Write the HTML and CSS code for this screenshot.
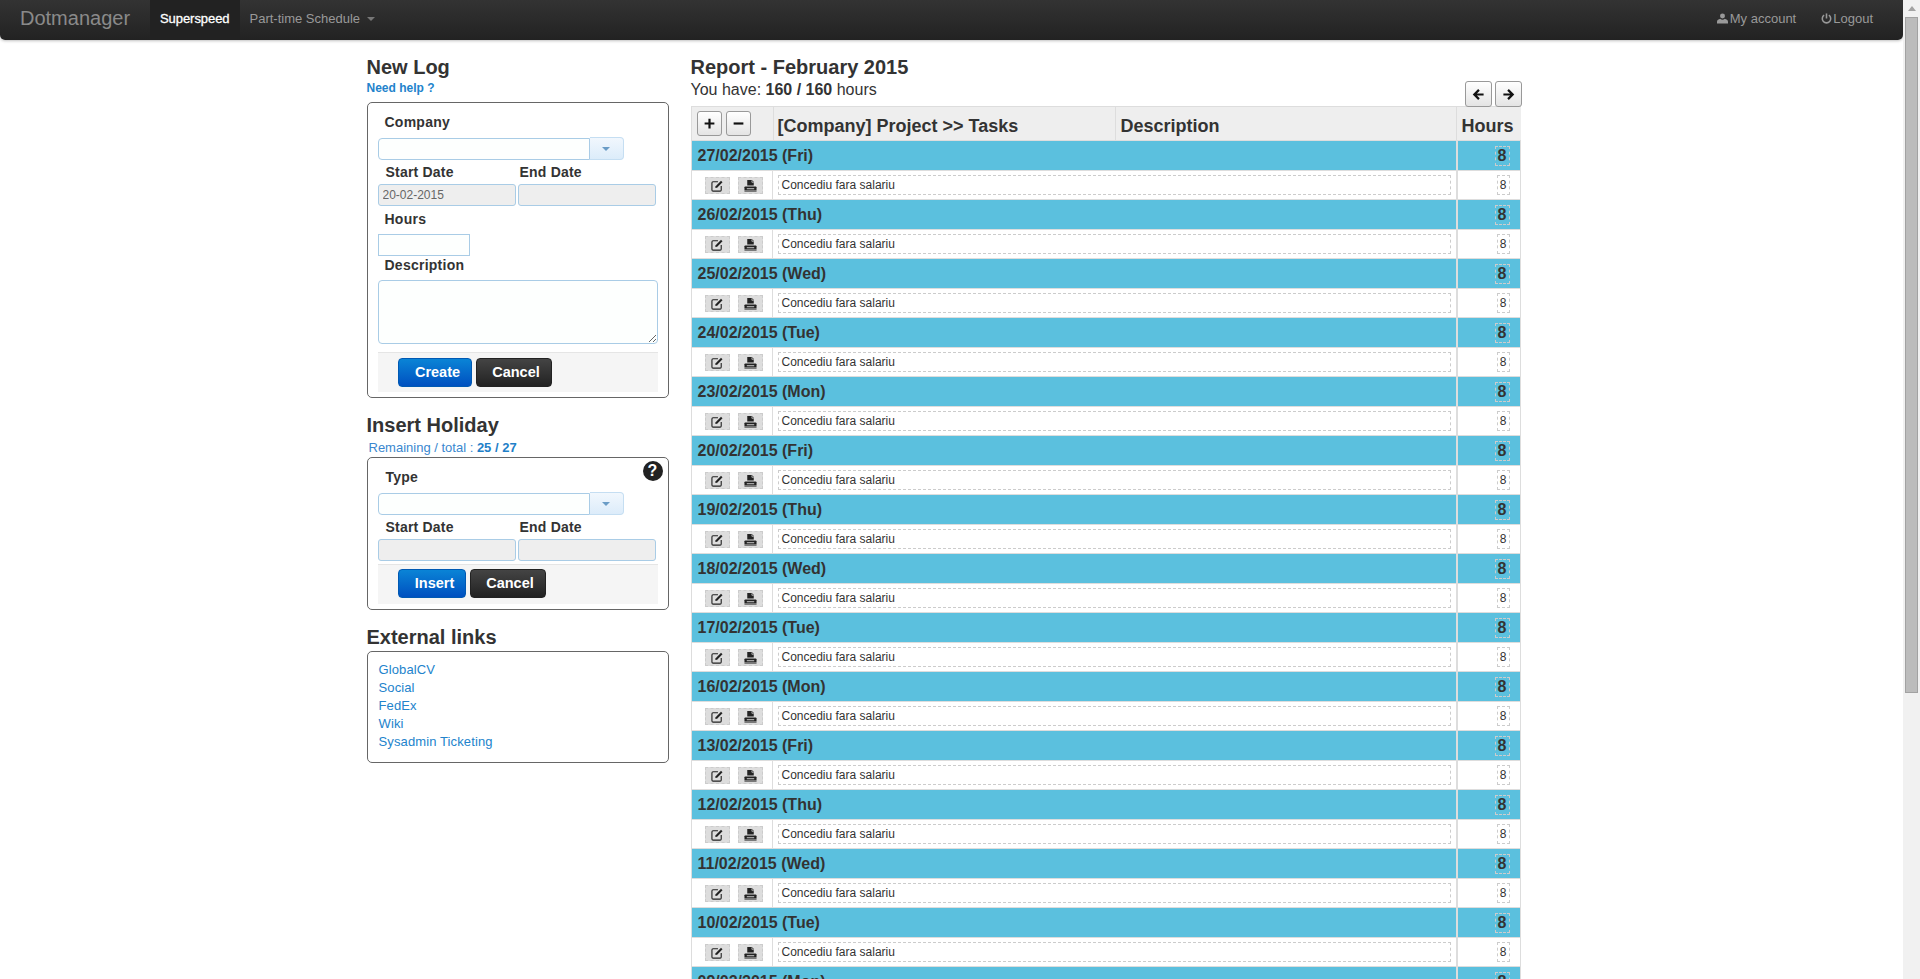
FILE: index.html
```html
<!DOCTYPE html>
<html lang="en">
<head>
    <meta charset="UTF-8">
    <title>Dotmanager</title>
    <link rel="stylesheet" href="styles.css">
</head>
<body>
    <svg class="sprite" xmlns="http://www.w3.org/2000/svg">
        <symbol id="i-edit" viewBox="0 0 14 14">
            <path d="M7.5 3H2.2C1.5 3 1 3.5 1 4.2v7.6c0 .7.5 1.2 1.2 1.2h7.6c.7 0 1.2-.5 1.2-1.2V7.5" fill="none" stroke="currentColor" stroke-width="1.2"/>
            <path d="M5 7.800 10.800 2l1.600 1.600L6.600 9.400l-2 .4z" fill="currentColor"/>
        </symbol>
        <symbol id="i-print" viewBox="0 0 14 14">
            <path d="M3.500 1h5l2 2v4h-7z" fill="currentColor"/>
            <path d="M8.500 1.500v2h2" fill="none" stroke="#ddd" stroke-width=".8"/>
            <path d="M1.500 8h11c.6 0 1 .4 1 1v3h-13V9c0-.6.4-1 1-1z" fill="currentColor"/>
            <path d="M3 10h8v1H3z" fill="#ddd"/>
            <path d="M.500 12.500h13v1h-13z" fill="currentColor"/>
        </symbol>
        <symbol id="i-user" viewBox="0 0 12 12">
            <circle cx="6" cy="3.200" r="2.700" fill="currentColor"/>
            <path d="M0 11.500V9.500C0 7.800 1.800 6.700 3.500 6.300 4.200 7 5.100 7.400 6 7.400s1.800-.4 2.500-1.100C10.200 6.700 12 7.800 12 9.500v2z" fill="currentColor"/>
        </symbol>
        <symbol id="i-off" viewBox="0 0 12 12">
            <path d="M3.400 2.400a4.600 4.600 0 1 0 5.200 0" fill="none" stroke="currentColor" stroke-width="1.700"/>
            <path d="M6 .5v5.500" fill="none" stroke="currentColor" stroke-width="1.700"/>
        </symbol>
        <symbol id="i-left" viewBox="0 0 14 14">
            <path d="M12.500 7H3M7.500 2 2.500 7l5 5" fill="none" stroke="currentColor" stroke-width="2.400"/>
        </symbol>
        <symbol id="i-right" viewBox="0 0 14 14">
            <path d="M1.500 7H11M6.500 2l5 5-5 5" fill="none" stroke="currentColor" stroke-width="2.400"/>
        </symbol>
        <symbol id="i-plus" viewBox="0 0 12 12">
            <path d="M6 1.500v9M1.500 6h9" fill="none" stroke="currentColor" stroke-width="2"/>
        </symbol>
        <symbol id="i-minus" viewBox="0 0 12 12">
            <path d="M1.500 6h9" fill="none" stroke="currentColor" stroke-width="2"/>
        </symbol>
    </svg>

    <div class="viewport">
        <div class="page">
            <div class="navbar">
                <a class="brand">Dotmanager</a>
                <a class="nav-item active">Superspeed</a>
                <a class="nav-item">Part-time Schedule <span class="caret"></span></a>
                <div class="nav-right">
                    <a class="nav-item"><svg class="nav-icon"><use href="#i-user"/></svg>My account</a>
                    <a class="nav-item"><svg class="nav-icon off-icon"><use href="#i-off"/></svg>Logout</a>
                </div>
            </div>

            <div class="container">
                <div class="sidebar">
                    <h3>New Log</h3>
                    <a class="help-link">Need help ?</a>
                    <div class="box log-box">
                        <label class="field-label">Company</label>
                        <div class="combo">
                            <input type="text">
                            <span class="combo-btn"><span class="combo-caret"></span></span>
                        </div>
                        <div class="date-row">
                            <div>
                                <label class="date-label">Start Date</label>
                                <input type="text" class="date-input" value="20-02-2015" disabled>
                            </div>
                            <div>
                                <label class="date-label">End Date</label>
                                <input type="text" class="date-input" disabled>
                            </div>
                        </div>
                        <label class="field-label hours-label">Hours</label>
                        <input type="text" class="hours-input">
                        <label class="field-label desc-label">Description</label>
                        <textarea class="desc-input"></textarea>
                        <div class="actions">
                            <button class="btn btn-primary create-btn">Create</button>
                            <button class="btn btn-dark">Cancel</button>
                        </div>
                    </div>

                    <h3 class="next-title">Insert Holiday</h3>
                    <div class="remaining">Remaining / total : <b>25 / 27</b></div>
                    <div class="box holiday-box">
                        <span class="help-badge">?</span>
                        <label class="field-label type-label">Type</label>
                        <div class="combo">
                            <input type="text">
                            <span class="combo-btn"><span class="combo-caret"></span></span>
                        </div>
                        <div class="date-row">
                            <div>
                                <label class="date-label">Start Date</label>
                                <input type="text" class="date-input" disabled>
                            </div>
                            <div>
                                <label class="date-label">End Date</label>
                                <input type="text" class="date-input" disabled>
                            </div>
                        </div>
                        <div class="actions holiday-actions">
                            <button class="btn btn-primary insert-btn">Insert</button>
                            <button class="btn btn-dark">Cancel</button>
                        </div>
                    </div>

                    <h3 class="next-title links-title">External links</h3>
                    <div class="box links-box">
                        <a>GlobalCV</a>
                        <a>Social</a>
                        <a>FedEx</a>
                        <a>Wiki</a>
                        <a>Sysadmin Ticketing</a>
                    </div>
                </div>

                <div class="report">
                    <div class="report-head">
                        <div>
                            <h3>Report - February 2015</h3>
                            <p class="summary">You have: <b>160 / 160</b> hours</p>
                        </div>
                        <div class="month-nav">
                            <button class="tool-btn"><svg><use href="#i-left"/></svg></button>
                            <button class="tool-btn"><svg><use href="#i-right"/></svg></button>
                        </div>
                    </div>

                    <table class="log-table">
                        <colgroup>
                            <col class="col-tools">
                            <col class="col-project">
                            <col class="col-desc">
                            <col class="col-hours">
                        </colgroup>
                        <thead>
                            <tr>
                                <th class="tools-head">
                                    <button class="tool-btn"><svg><use href="#i-plus"/></svg></button>
                                    <button class="tool-btn"><svg><use href="#i-minus"/></svg></button>
                                </th>
                                <th class="project-head">[Company] Project &gt;&gt; Tasks</th>
                                <th>Description</th>
                                <th>Hours</th>
                            </tr>
                        </thead>
                        <tbody>
                            <tr class="day"><td colspan="3">27/02/2015 (Fri)</td><td class="hours"><span>8</span></td></tr>
                            <tr class="entry"><td class="icons"><i><svg><use href="#i-edit"/></svg></i><i><svg><use href="#i-print"/></svg></i></td><td colspan="2"><div class="entry-text">Concediu fara salariu</div></td><td class="hours"><span>8</span></td></tr>
                            <tr class="day"><td colspan="3">26/02/2015 (Thu)</td><td class="hours"><span>8</span></td></tr>
                            <tr class="entry"><td class="icons"><i><svg><use href="#i-edit"/></svg></i><i><svg><use href="#i-print"/></svg></i></td><td colspan="2"><div class="entry-text">Concediu fara salariu</div></td><td class="hours"><span>8</span></td></tr>
                            <tr class="day"><td colspan="3">25/02/2015 (Wed)</td><td class="hours"><span>8</span></td></tr>
                            <tr class="entry"><td class="icons"><i><svg><use href="#i-edit"/></svg></i><i><svg><use href="#i-print"/></svg></i></td><td colspan="2"><div class="entry-text">Concediu fara salariu</div></td><td class="hours"><span>8</span></td></tr>
                            <tr class="day"><td colspan="3">24/02/2015 (Tue)</td><td class="hours"><span>8</span></td></tr>
                            <tr class="entry"><td class="icons"><i><svg><use href="#i-edit"/></svg></i><i><svg><use href="#i-print"/></svg></i></td><td colspan="2"><div class="entry-text">Concediu fara salariu</div></td><td class="hours"><span>8</span></td></tr>
                            <tr class="day"><td colspan="3">23/02/2015 (Mon)</td><td class="hours"><span>8</span></td></tr>
                            <tr class="entry"><td class="icons"><i><svg><use href="#i-edit"/></svg></i><i><svg><use href="#i-print"/></svg></i></td><td colspan="2"><div class="entry-text">Concediu fara salariu</div></td><td class="hours"><span>8</span></td></tr>
                            <tr class="day"><td colspan="3">20/02/2015 (Fri)</td><td class="hours"><span>8</span></td></tr>
                            <tr class="entry"><td class="icons"><i><svg><use href="#i-edit"/></svg></i><i><svg><use href="#i-print"/></svg></i></td><td colspan="2"><div class="entry-text">Concediu fara salariu</div></td><td class="hours"><span>8</span></td></tr>
                            <tr class="day"><td colspan="3">19/02/2015 (Thu)</td><td class="hours"><span>8</span></td></tr>
                            <tr class="entry"><td class="icons"><i><svg><use href="#i-edit"/></svg></i><i><svg><use href="#i-print"/></svg></i></td><td colspan="2"><div class="entry-text">Concediu fara salariu</div></td><td class="hours"><span>8</span></td></tr>
                            <tr class="day"><td colspan="3">18/02/2015 (Wed)</td><td class="hours"><span>8</span></td></tr>
                            <tr class="entry"><td class="icons"><i><svg><use href="#i-edit"/></svg></i><i><svg><use href="#i-print"/></svg></i></td><td colspan="2"><div class="entry-text">Concediu fara salariu</div></td><td class="hours"><span>8</span></td></tr>
                            <tr class="day"><td colspan="3">17/02/2015 (Tue)</td><td class="hours"><span>8</span></td></tr>
                            <tr class="entry"><td class="icons"><i><svg><use href="#i-edit"/></svg></i><i><svg><use href="#i-print"/></svg></i></td><td colspan="2"><div class="entry-text">Concediu fara salariu</div></td><td class="hours"><span>8</span></td></tr>
                            <tr class="day"><td colspan="3">16/02/2015 (Mon)</td><td class="hours"><span>8</span></td></tr>
                            <tr class="entry"><td class="icons"><i><svg><use href="#i-edit"/></svg></i><i><svg><use href="#i-print"/></svg></i></td><td colspan="2"><div class="entry-text">Concediu fara salariu</div></td><td class="hours"><span>8</span></td></tr>
                            <tr class="day"><td colspan="3">13/02/2015 (Fri)</td><td class="hours"><span>8</span></td></tr>
                            <tr class="entry"><td class="icons"><i><svg><use href="#i-edit"/></svg></i><i><svg><use href="#i-print"/></svg></i></td><td colspan="2"><div class="entry-text">Concediu fara salariu</div></td><td class="hours"><span>8</span></td></tr>
                            <tr class="day"><td colspan="3">12/02/2015 (Thu)</td><td class="hours"><span>8</span></td></tr>
                            <tr class="entry"><td class="icons"><i><svg><use href="#i-edit"/></svg></i><i><svg><use href="#i-print"/></svg></i></td><td colspan="2"><div class="entry-text">Concediu fara salariu</div></td><td class="hours"><span>8</span></td></tr>
                            <tr class="day"><td colspan="3">11/02/2015 (Wed)</td><td class="hours"><span>8</span></td></tr>
                            <tr class="entry"><td class="icons"><i><svg><use href="#i-edit"/></svg></i><i><svg><use href="#i-print"/></svg></i></td><td colspan="2"><div class="entry-text">Concediu fara salariu</div></td><td class="hours"><span>8</span></td></tr>
                            <tr class="day"><td colspan="3">10/02/2015 (Tue)</td><td class="hours"><span>8</span></td></tr>
                            <tr class="entry"><td class="icons"><i><svg><use href="#i-edit"/></svg></i><i><svg><use href="#i-print"/></svg></i></td><td colspan="2"><div class="entry-text">Concediu fara salariu</div></td><td class="hours"><span>8</span></td></tr>
                            <tr class="day"><td colspan="3">09/02/2015 (Mon)</td><td class="hours"><span>8</span></td></tr>
                        </tbody>
                    </table>
                </div>
            </div>
        </div>

        <div class="scrollbar">
            <span class="scroll-arrow"></span>
            <span class="scroll-thumb"></span>
        </div>
    </div>
</body>
</html>
```

FILE: styles.css
```css
html, body {
    margin: 0;
    height: 979px;
    overflow: hidden;
}
body {
    font-family: "Liberation Sans", Arial, sans-serif;
    font-size: 14px;
    color: #333;
    background: #fff;
}
* {
    box-sizing: border-box;
}
.sprite {
    display: none;
}
.viewport {
    display: flex;
    height: 979px;
}
.page {
    flex: 1;
    min-width: 0;
    overflow: hidden;
}

/* fake scrollbar, the page itself is clipped */
.scrollbar {
    width: 17px;
    background: #f1f1f1;
    display: flex;
    flex-direction: column;
    align-items: center;
}
.scroll-arrow {
    margin-top: 6px;
    width: 0;
    height: 0;
    border-left: 4px solid transparent;
    border-right: 4px solid transparent;
    border-bottom: 5px solid #a3a3a3;
}
.scroll-thumb {
    margin-top: 6px;
    width: 13px;
    height: 676px;
    background: #bcbcbc;
    border: 1px solid #a2a2a2;
}

/* navbar */
.navbar {
    height: 40px;
    display: flex;
    padding-left: 20px;
    background: linear-gradient(to bottom, #333, #222);
    border-radius: 0 0 5px 5px;
    box-shadow: 0 1px 3px rgba(0, 0, 0, 0.25);
}
.brand {
    width: 130px;
    font-size: 20px;
    line-height: 37px;
    color: #8a8a8a;
}
.nav-item {
    display: flex;
    align-items: center;
    padding: 0 10px 3px;
    font-size: 13px;
    color: #999;
    white-space: pre;
}
.nav-item.active {
    color: #fff;
    background: #222;
    letter-spacing: -0.06px;
    -webkit-text-stroke: 0.3px #fff;
}
.caret {
    width: 0;
    height: 0;
    margin-left: 3px;
    border-left: 4px solid transparent;
    border-right: 4px solid transparent;
    border-top: 4px solid #777;
}
.nav-right {
    margin-left: auto;
    margin-right: 20px;
    display: flex;
    gap: 5px;
}
.nav-icon {
    width: 11px;
    height: 11px;
    margin-right: 2px;
}
.off-icon {
    margin-right: 1px;
}

/* layout */
.container {
    width: 1170px;
    margin: 0 auto;
    padding-top: 15px;
    display: flex;
    gap: 22px;
}
.sidebar {
    width: 302px;
    flex: none;
}
.report {
    width: 830px;
    flex: none;
}
h3 {
    margin: 0;
    font-size: 20px;
    line-height: 24px;
    font-weight: bold;
}
a {
    color: #2283cc;
}
.help-link {
    display: block;
    height: 23px;
    padding-top: 1px;
    font-size: 12px;
    line-height: 17px;
    font-weight: bold;
}
.next-title {
    margin-top: 15px;
}
.links-title {
    margin: 15px 0 2px;
}
.remaining {
    height: 20px;
    padding: 3px 0 0 2px;
    font-size: 13px;
    line-height: 16px;
    color: #3a87cf;
}
.remaining b {
    color: #1f80c8;
}

/* form boxes */
.box {
    position: relative;
    border: 1px solid #666;
    border-radius: 5px;
    padding: 10px 10px 5px;
    background: #fff;
}
.field-label {
    display: block;
    padding-left: 7px;
    font-weight: bold;
    font-size: 14px;
    line-height: 18px;
    letter-spacing: 0.25px;
}
.type-label {
    padding-left: 8px;
}
.hours-label {
    margin-top: 4px;
}
.desc-label {
    margin-top: 0;
}
input, textarea {
    font-family: inherit;
    font-size: 12px;
    color: #555;
    border: 1px solid #a9cce6;
    background: #fdfffe;
    padding: 0 4px;
    outline: none;
}
.combo {
    display: flex;
    margin-top: 7px;
}
.combo input {
    width: 212px;
    height: 22px;
    border-radius: 4px 0 0 4px;
}
.combo-btn {
    width: 34px;
    height: 23px;
    margin-top: -1px;
    display: flex;
    align-items: center;
    justify-content: center;
    background: linear-gradient(to bottom, #f1f7fd, #dcecfa);
    border: 1px solid #c5def2;
    border-left: none;
    border-radius: 0 4px 4px 0;
}
.combo-caret {
    width: 0;
    height: 0;
    border-left: 4px solid transparent;
    border-right: 4px solid transparent;
    border-top: 4px solid #6a9cc6;
}
.date-row {
    display: flex;
    gap: 2px;
    margin-top: 3px;
}
.date-label {
    display: block;
    height: 21px;
    padding-left: 8px;
    font-weight: bold;
    line-height: 18px;
    letter-spacing: 0.2px;
}
.date-row > div + div .date-label {
    padding-left: 2px;
}
.date-input {
    display: block;
    width: 138px;
    height: 22px;
    background: #eee;
    border-radius: 3px;
    padding: 0 4px;
    color: #666;
}
.hours-input {
    display: block;
    width: 92px;
    height: 22px;
    margin-top: 6px;
}
.desc-input {
    display: block;
    width: 280px;
    height: 64px;
    margin-top: 6px;
    border-radius: 4px;
}
.actions {
    display: flex;
    gap: 4px;
    margin-top: 8px;
    height: 40px;
    padding: 5px 0 0 20px;
    background: #f5f5f5;
    border-top: 1px solid #e5e5e5;
}
.holiday-actions {
    margin-top: 3px;
    padding-top: 4px;
}
.btn {
    height: 29px;
    border-radius: 4px;
    font-family: inherit;
    font-size: 14.5px;
    font-weight: bold;
    color: #fff;
    padding: 0 0 2px;
}
.btn-primary {
    width: 74px;
    padding-left: 6px;
    border: 1px solid #0059b3;
    background: linear-gradient(to bottom, #0a84d6, #0050c0);
}
.insert-btn {
    width: 68px;
}
.btn-dark {
    width: 76px;
    padding-left: 5px;
    border: 1px solid #222;
    background: linear-gradient(to bottom, #444, #222);
}
.help-badge {
    position: absolute;
    top: 3px;
    right: 5px;
    width: 20px;
    height: 20px;
    border-radius: 50%;
    background: #222;
    color: #fff;
    font-size: 16px;
    font-weight: bold;
    line-height: 20px;
    text-align: center;
}
.links-box {
    padding: 9px 10px 11px 11px;
}
.links-box a {
    display: block;
    font-size: 13px;
    line-height: 18px;
    letter-spacing: 0.12px;
}

/* report */
.report-head {
    display: flex;
    justify-content: space-between;
    align-items: flex-end;
    height: 51px;
}
.summary {
    margin: 1px 0 0;
    font-size: 16px;
    line-height: 20px;
    padding-bottom: 6px;
}
.month-nav {
    display: flex;
    gap: 3px;
    margin-right: -1px;
}
.tool-btn {
    width: 26px;
    height: 25px;
    padding: 0;
    display: flex;
    align-items: center;
    justify-content: center;
    background: linear-gradient(to bottom, #fff, #e4e4e4);
    border: 1px solid #999;
    border-radius: 3px;
    color: #111;
}
.month-nav .tool-btn {
    width: 27px;
    height: 26px;
    margin-bottom: -1px;
}
.tool-btn svg {
    width: 13px;
    height: 13px;
}
.log-table {
    width: 830px;
    table-layout: fixed;
    border-collapse: separate;
    border-spacing: 0;
    border-left: 1px solid #ddd;
}
.col-tools {
    width: 81px;
}
.col-project {
    width: 342px;
}
.col-desc {
    width: 341px;
}
.col-hours {
    width: 65px;
}
.log-table th {
    height: 35px;
    padding: 5px 5px 0;
    background: #eee;
    border-top: 1px solid #ddd;
    border-bottom: 1px solid #ddd;
    border-left: 1px solid #ddd;
    text-align: left;
    font-size: 18px;
    line-height: 24px;
    white-space: nowrap;
}
.log-table th.project-head {
    padding-left: 4px;
}
.log-table th.tools-head {
    border-left: none;
    padding: 4px 0 0 5px;
    vertical-align: top;
}
.tools-head .tool-btn {
    display: inline-flex;
    width: 25px;
    margin-right: 4px;
    float: left;
}
.log-table td {
    padding: 0;
    border-bottom: 1px solid #ddd;
}
.day td {
    height: 30px;
    padding-left: 6px;
    background: #5bc0de;
    font-size: 16px;
    font-weight: bold;
}
.entry td {
    height: 29px;
    background: #fff;
    font-size: 12px;
}
.log-table td.hours {
    padding: 0 10px 0 0;
    border-left: 2px solid #ddd;
    text-align: right;
    border-right: 1px solid #ddd;
}
.hours span {
    display: inline-block;
    height: 20px;
    line-height: 18px;
    border: 1px dashed #ccc;
    text-align: center;
}
.day .hours span {
    width: 15px;
}
.entry .hours span {
    width: 13px;
}
.entry .icons {
    border-right: 1px solid #ddd;
}
.icons {
    white-space: nowrap;
}
.icons i {
    display: inline-flex;
    align-items: center;
    justify-content: center;
    width: 25px;
    height: 17px;
    margin-left: 13px;
    background: #ddd;
    border: 1px dashed #ccc;
    color: #222;
    vertical-align: middle;
}
.icons svg {
    width: 13px;
    height: 13px;
}
.icons i + i {
    margin-left: 8px;
}
.entry td:nth-child(2) {
    padding: 0 5px;
}
.entry-text {
    height: 20px;
    padding-left: 3px;
    line-height: 18px;
    border: 1px dashed #ccc;
}
```
